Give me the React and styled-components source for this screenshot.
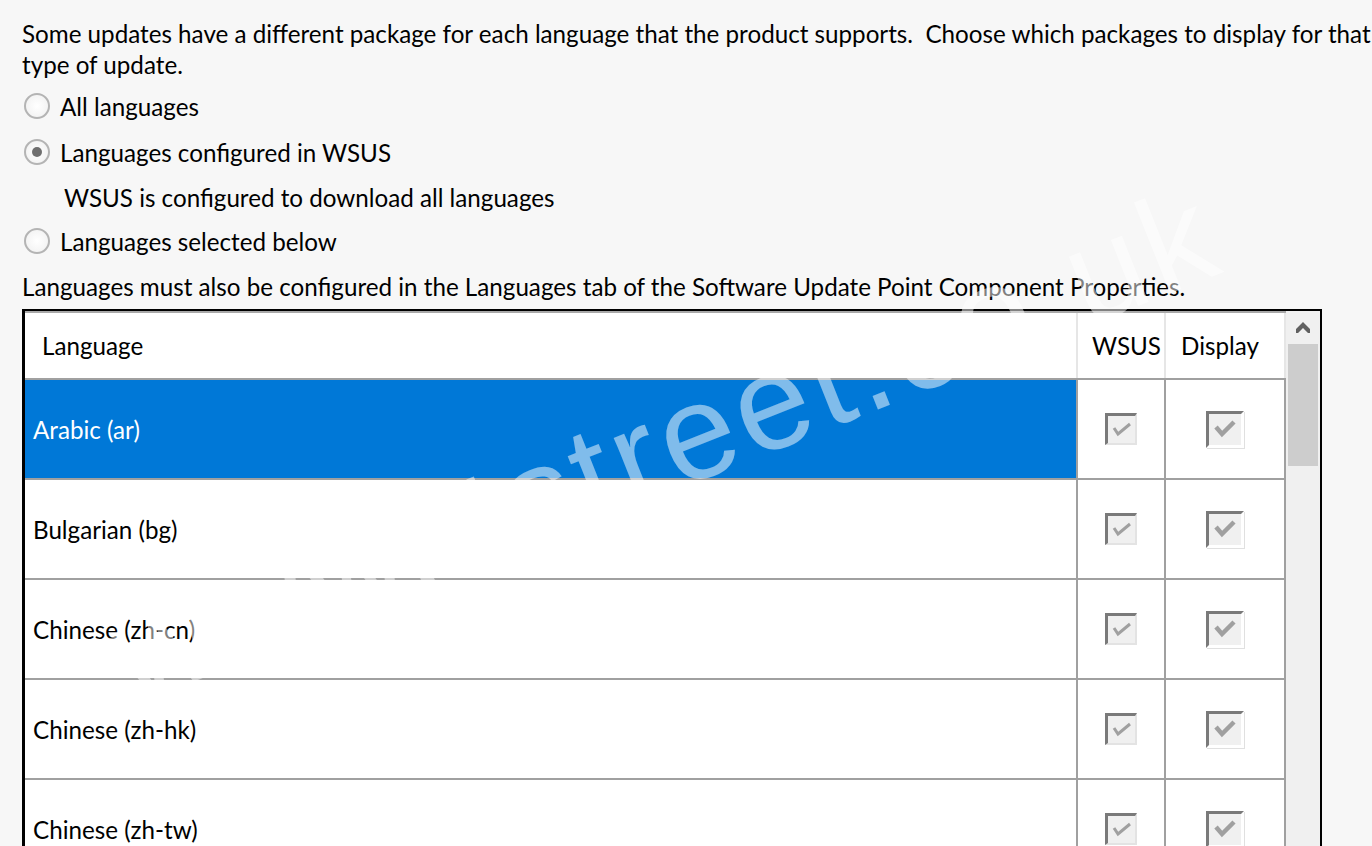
import React from 'react';
import styled, { createGlobalStyle } from 'styled-components';

const GlobalStyle = createGlobalStyle`
  html, body { margin: 0; padding: 0; background: #f7f7f7; overflow: hidden; }
  body { font-family: Lato, "Noto Sans", sans-serif; }
`;

const Page = styled.div`
  position: relative;
  width: 1372px;
  height: 846px;
  overflow: hidden;
  box-sizing: border-box;
  padding-left: 22px;
  font-family: Lato, "Noto Sans", sans-serif;
  font-size: 24.2px;
  color: #000;
`;

const Intro = styled.p`
  margin: 18px 0 3px 0;
  line-height: 31px;
  white-space: nowrap;
`;

const OptionRow = styled.label`
  display: flex;
  align-items: center;
  gap: 10px;
  height: ${p => p.h || 46}px;
  padding-left: 2px;
  white-space: nowrap;
`;

const Radio = styled.span`
  flex: 0 0 26px;
  width: 26px;
  height: 26px;
  box-sizing: border-box;
  border-radius: 50%;
  border: 2px solid #b4b4b4;
  background: radial-gradient(circle at 50% 50%, #ffffff 0%, #f4f4f4 70%, #e8e8e8 100%);
  display: flex;
  align-items: center;
  justify-content: center;
  &::after {
    content: '';
    display: ${p => (p.checked ? 'block' : 'none')};
    width: 10px;
    height: 10px;
    border-radius: 50%;
    background: #6f6f6f;
  }
`;

const Note = styled.div`
  display: flex;
  align-items: center;
  height: 44px;
  padding-left: 42px;
  white-space: nowrap;
`;

const Footnote = styled.div`
  display: flex;
  align-items: center;
  height: 46px;
  white-space: nowrap;
`;

const Table = styled.div`
  display: flex;
  width: 1300px;
  height: 620px;
  box-sizing: border-box;
  border: 2px solid #000;
  border-left-width: 3px;
  background: #fff;
`;

const GridArea = styled.div`
  flex: 0 0 1261px;
  border-top: 2px solid #a9a9a9;
  background: #fff;
`;

const columns = '1053px 88px 120px';

const HeaderRow = styled.div`
  display: grid;
  grid-template-columns: ${columns};
  height: 65px;
`;

const HeaderCell = styled.div`
  display: flex;
  align-items: center;
  padding-left: ${p => p.pad}px;
  border-right: 2px solid #e6e6e6;
  white-space: nowrap;
`;

const BodyRow = styled.div`
  display: grid;
  grid-template-columns: ${columns};
  height: 98px;
  border-top: 2px solid #a0a0a0;
`;

const NameCell = styled.div`
  display: flex;
  align-items: center;
  padding-left: 8px;
  border-right: 2px solid #a0a0a0;
  background: ${p => (p.selected ? '#0078d7' : '#fff')};
  color: ${p => (p.selected ? '#fff' : '#000')};
  white-space: nowrap;
`;

const CheckCell = styled.div`
  display: flex;
  align-items: center;
  justify-content: center;
  border-right: 2px solid #a0a0a0;
`;

const Box = styled.span`
  display: flex;
  align-items: center;
  justify-content: center;
  box-sizing: border-box;
  width: ${p => (p.large ? 38 : 32)}px;
  height: ${p => (p.large ? 37 : 32)}px;
  background: #f0f0f0;
  border-top: 3px solid #7a7a7a;
  border-left: 3px solid #7a7a7a;
  border-right: ${p => (p.large ? '3px solid #fff' : '2px solid #e3e3e3')};
  border-bottom: ${p => (p.large ? '3px solid #fff' : '2px solid #e3e3e3')};
  box-shadow: ${p => (p.large ? '1px 1px 0 0 #e0e0e0' : 'none')};
`;

const Scrollbar = styled.div`
  flex: 0 0 34px;
  background: #f0f0f0;
  display: flex;
  flex-direction: column;
  align-items: center;
`;

const ArrowButton = styled.div`
  height: 33px;
  width: 100%;
  display: flex;
  align-items: center;
  justify-content: center;
`;

const Thumb = styled.div`
  width: 30px;
  height: 122px;
  background: #cdcdcd;
`;

const WatermarkBase = styled.div`
  position: absolute;
  left: 525px;
  top: 436px;
  font-family: "Liberation Sans", Arial, sans-serif;
  font-size: 135px;
  line-height: 1;
  letter-spacing: 5px;
  color: rgba(255, 255, 255, 0.5);
  white-space: nowrap;
  pointer-events: none;
  transform-origin: 0 0.8465em;
`;

const WatermarkTail = styled(WatermarkBase)`
  transform: rotate(-21.7deg);
`;

const WatermarkHead = styled(WatermarkBase)`
  transform: rotate(-21.7deg) translateX(-100%);
`;

const Check = ({ large }) =>
  large ? (
    <svg width="22" height="20" viewBox="0 0 22 20">
      <polyline points="2,8 8,15 20,3" fill="none" stroke="#a0a0a0" strokeWidth="4.5" strokeLinejoin="miter" />
    </svg>
  ) : (
    <svg width="20" height="16" viewBox="0 0 20 16">
      <polyline points="2,6 6,12 18,2" fill="none" stroke="#a0a0a0" strokeWidth="3" strokeLinejoin="miter" />
    </svg>
  );

const UpArrow = () => (
  <svg width="14" height="11" viewBox="0 0 14 11">
    <polygon points="7,0 14,7 14,11 12,11 7,6 2,11 0,11 0,7" fill="#606060" />
  </svg>
);

const languages = [
  'Arabic (ar)',
  'Bulgarian (bg)',
  'Chinese (zh-cn)',
  'Chinese (zh-hk)',
  'Chinese (zh-tw)',
  'Croatian (hr)',
];

export default function App() {
  return (
    <>
      <GlobalStyle />
      <Page>
        <Intro>
          Some updates have a different package for each language that the product supports.&nbsp; Choose which packages to display for that
          <br />
          type of update.
        </Intro>
        <OptionRow>
          <Radio />
          All languages
        </OptionRow>
        <OptionRow>
          <Radio checked />
          Languages configured in WSUS
        </OptionRow>
        <Note>WSUS is configured to download all languages</Note>
        <OptionRow h={44}>
          <Radio />
          Languages selected below
        </OptionRow>
        <Footnote>
          Languages must also be configured in the Languages tab of the Software Update Point Component Properties.
        </Footnote>
        <Table>
          <GridArea>
            <HeaderRow>
              <HeaderCell pad={17}>Language</HeaderCell>
              <HeaderCell pad={14}>WSUS</HeaderCell>
              <HeaderCell pad={15}>Display</HeaderCell>
            </HeaderRow>
            {languages.map((name, i) => (
              <BodyRow key={name}>
                <NameCell selected={i === 0}>{name}</NameCell>
                <CheckCell>
                  <Box>
                    <Check />
                  </Box>
                </CheckCell>
                <CheckCell>
                  <Box large>
                    <Check large />
                  </Box>
                </CheckCell>
              </BodyRow>
            ))}
          </GridArea>
          <Scrollbar>
            <ArrowButton>
              <UpArrow />
            </ArrowButton>
            <Thumb />
          </Scrollbar>
        </Table>
        <WatermarkHead>www.it</WatermarkHead>
        <WatermarkTail>street.co.uk</WatermarkTail>
      </Page>
    </>
  );
}
